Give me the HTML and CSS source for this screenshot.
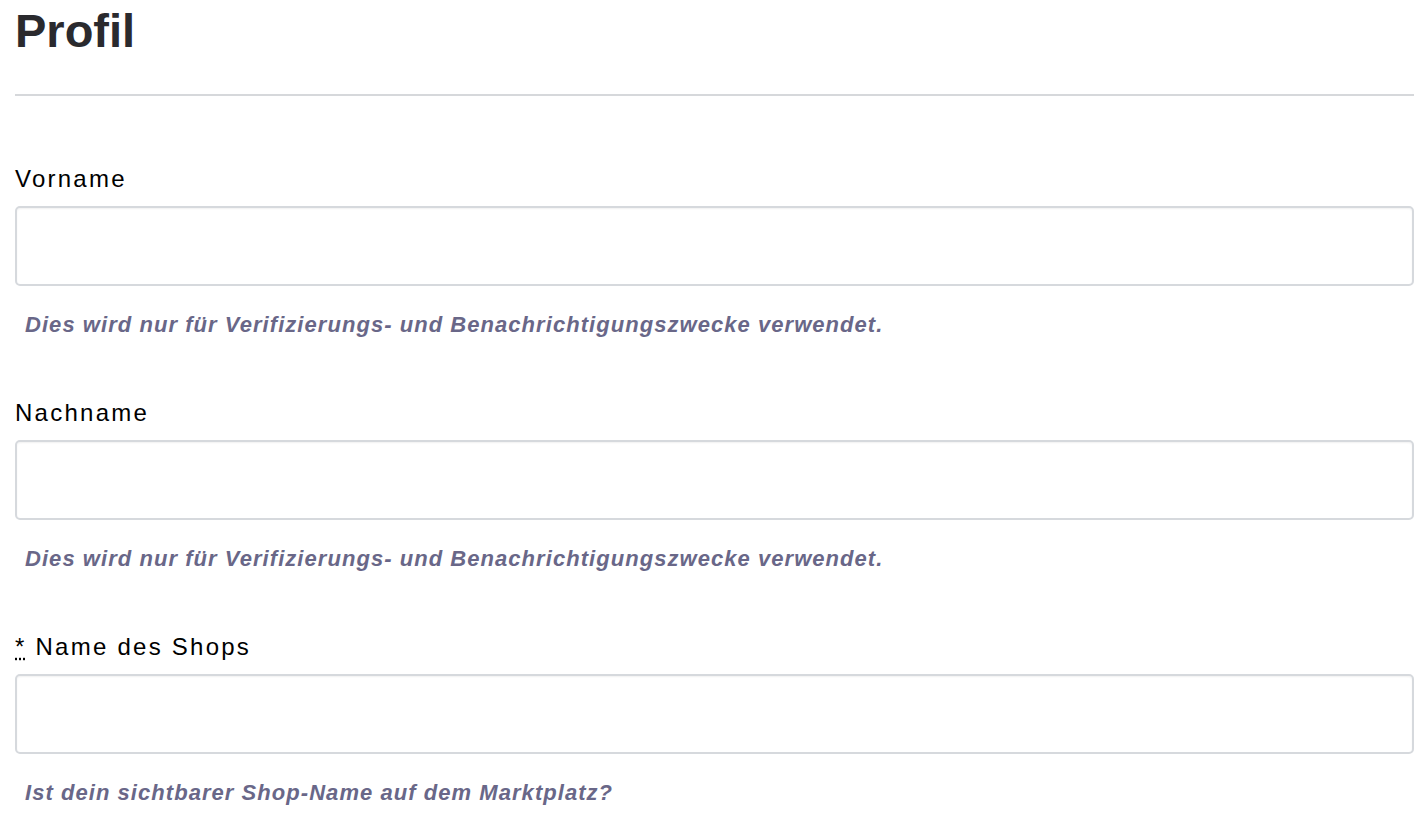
FILE: index.html
```html
<!DOCTYPE html>
<html lang="de">
<head>
<meta charset="utf-8">
<title>Profil</title>
<link rel="stylesheet" href="styles.css">
</head>
<body>
<main class="page">
  <h1 class="title">Profil</h1>
  <hr class="rule">
  <form class="form">
    <div class="field">
      <label class="label" for="vorname">Vorname</label>
      <input class="input" id="vorname" type="text">
      <p class="help">Dies wird nur für Verifizierungs- und Benachrichtigungszwecke verwendet.</p>
    </div>
    <div class="field">
      <label class="label" for="nachname">Nachname</label>
      <input class="input" id="nachname" type="text">
      <p class="help">Dies wird nur für Verifizierungs- und Benachrichtigungszwecke verwendet.</p>
    </div>
    <div class="field">
      <label class="label" for="shop"><abbr class="req" title="erforderlich">*</abbr> Name des Shops</label>
      <input class="input" id="shop" type="text">
      <p class="help">Ist dein sichtbarer Shop-Name auf dem Marktplatz?</p>
    </div>
  </form>
</main>
</body>
</html>
```
FILE: styles.css
```css
html, body {
  margin: 0;
  padding: 0;
  background: #ffffff;
}
body {
  font-family: "Liberation Sans", Arial, Helvetica, sans-serif;
  color: #000000;
}
.page {
  padding: 0 8px 0 15px;
}
.title {
  margin: 3px 0 0;
  font-size: 47px;
  line-height: 56px;
  font-weight: 700;
  color: #2a2a2e;
}
.rule {
  margin: 35px 0 0;
  border: 0;
  height: 2px;
  background: #d6d8db;
}
.form {
  display: flex;
  flex-direction: column;
  padding-top: 69px;
  gap: 62px;
}
.field {
  display: flex;
  flex-direction: column;
}
.label {
  font-size: 24px;
  line-height: 28px;
  height: 28px;
  margin-bottom: 13px;
  letter-spacing: 2.25px;
}
.req {
  text-decoration: underline dotted;
  text-underline-offset: 3px;
  cursor: help;
}
.input {
  box-sizing: border-box;
  height: 80px;
  width: 100%;
  margin: 0;
  border: 2px solid #d6d9dd;
  border-radius: 5px;
  box-shadow: inset 0 1px 2px rgba(0, 0, 0, 0.06);
  background: #ffffff;
  font: inherit;
  font-size: 24px;
  padding: 0 12px;
}
.help {
  margin: 27px 0 0 10px;
  font-size: 22px;
  line-height: 24px;
  font-weight: 700;
  font-style: italic;
  letter-spacing: 1.05px;
  color: #696788;
}
```
